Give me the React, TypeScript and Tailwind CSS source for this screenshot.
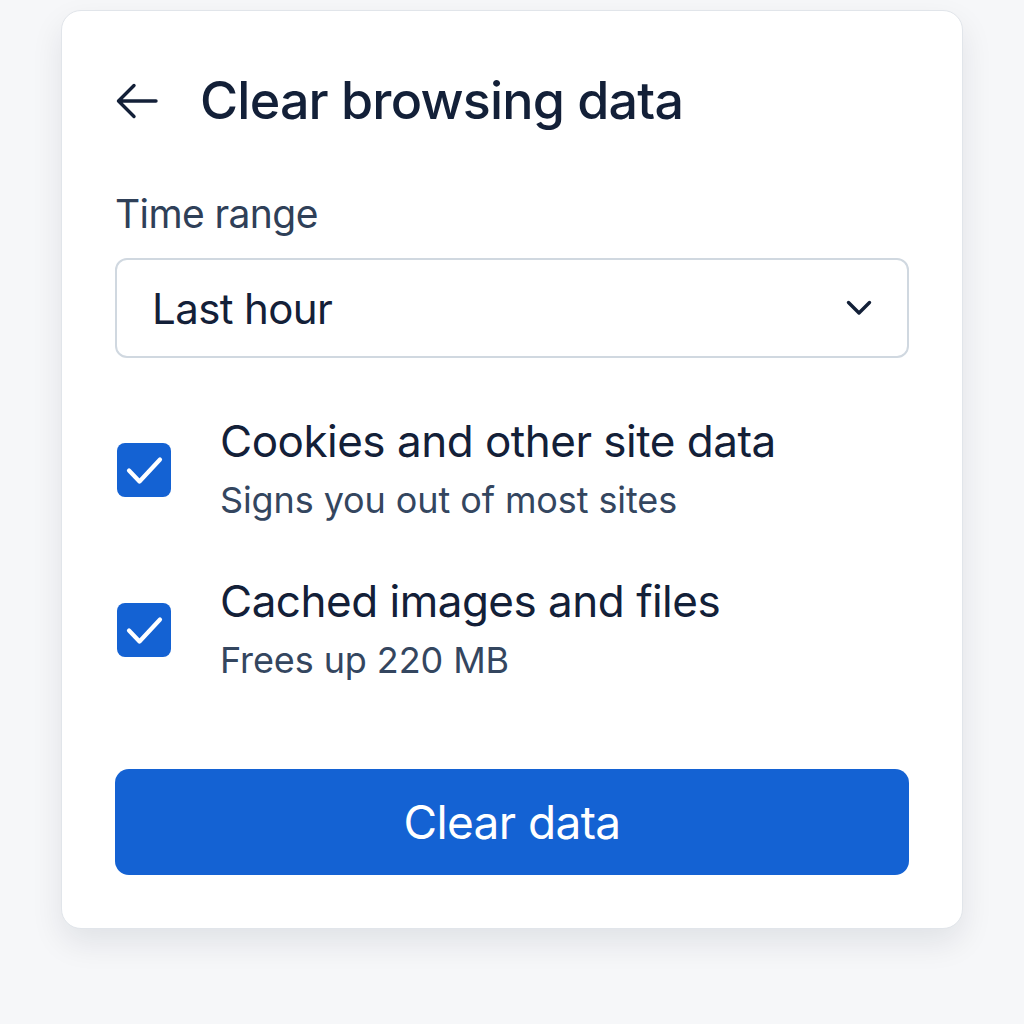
import React, { useState } from 'react';

interface OptionRowProps {
  title: string;
  subtitle: string;
  checked: boolean;
  onToggle: () => void;
}

const CheckIcon = () => (
  <svg className="w-[54px] h-[54px]" viewBox="0 0 54 54" fill="none" stroke="currentColor" strokeWidth={4.2} strokeLinecap="round" strokeLinejoin="round">
    <path d="M12 27.5l10.5 11L43 16.5" />
  </svg>
);

const OptionRow: React.FC<OptionRowProps> = ({ title, subtitle, checked, onToggle }) => (
  <div className="flex items-start">
    <button
      type="button"
      onClick={onToggle}
      className={`mt-[28px] ml-[2px] w-[54px] h-[54px] rounded-[8px] flex items-center justify-center text-white shrink-0 ${checked ? 'bg-[#1462d3]' : 'bg-white border-2 border-[#cfd6de]'}`}
      aria-checked={checked}
      role="checkbox"
    >
      {checked && <CheckIcon />}
    </button>
    <div className="ml-[49px] flex flex-col">
      <span className="text-[44px] leading-[52px] tracking-[-0.5px] text-[#132038]">{title}</span>
      <span className="mt-[12px] text-[36px] leading-[42px] tracking-[-0.1px] text-[#34465f]">{subtitle}</span>
    </div>
  </div>
);

export default function App() {
  const [cookies, setCookies] = useState(true);
  const [cache, setCache] = useState(true);

  return (
    <div className="min-h-screen bg-[#f6f7f9] pt-[10px] pl-[61px]" style={{ fontFamily: 'Inter, "Noto Sans", sans-serif' }}>
      <div className="w-[902px] h-[919px] bg-white rounded-[20px] border border-[#e1e5ea] shadow-[0_14px_32px_rgba(15,23,42,0.09)] px-[53px] pt-[60px]">
        {/* Header */}
        <div className="flex items-center h-[60px]">
          <button className="text-[#132038] ml-[1px] flex items-center" aria-label="Back">
            <svg className="w-[42px] h-[36px]" viewBox="0 0 42 36" fill="none" stroke="currentColor" strokeWidth={3.4} strokeLinecap="round" strokeLinejoin="round">
              <path d="M40 18H2.5M18 2.5L2.5 18L18 33.5" />
            </svg>
          </button>
          <h1 className="ml-[42px] text-[52px] leading-[60px] font-medium text-[#132038] tracking-[-0.8px]">Clear browsing data</h1>
        </div>

        {/* Time range */}
        <div className="mt-[60px] text-[39px] leading-[46px] tracking-[-0.6px] text-[#2f4058]">Time range</div>
        <button className="mt-[21px] w-full h-[100px] rounded-[12px] border-2 border-[#d0d8e0] flex items-center justify-between pl-[35px] pr-[35px] text-[#132038]">
          <span className="text-[42px] tracking-[-0.6px]">Last hour</span>
          <svg className="w-[26px] h-[16px]" viewBox="0 0 26 16" fill="none" stroke="currentColor" strokeWidth={3.4} strokeLinecap="round" strokeLinejoin="round">
            <path d="M2.5 2.5L13 13L23.5 2.5" />
          </svg>
        </button>

        {/* Options */}
        <div className="mt-[57px] flex flex-col gap-[54px]">
          <OptionRow title="Cookies and other site data" subtitle="Signs you out of most sites" checked={cookies} onToggle={() => setCookies(!cookies)} />
          <OptionRow title="Cached images and files" subtitle="Frees up 220 MB" checked={cache} onToggle={() => setCache(!cache)} />
        </div>

        <button className="mt-[88px] w-full h-[106px] rounded-[14px] bg-[#1462d3] text-white text-[46px] tracking-[-0.6px]">
          Clear data
        </button>
      </div>
    </div>
  );
}
